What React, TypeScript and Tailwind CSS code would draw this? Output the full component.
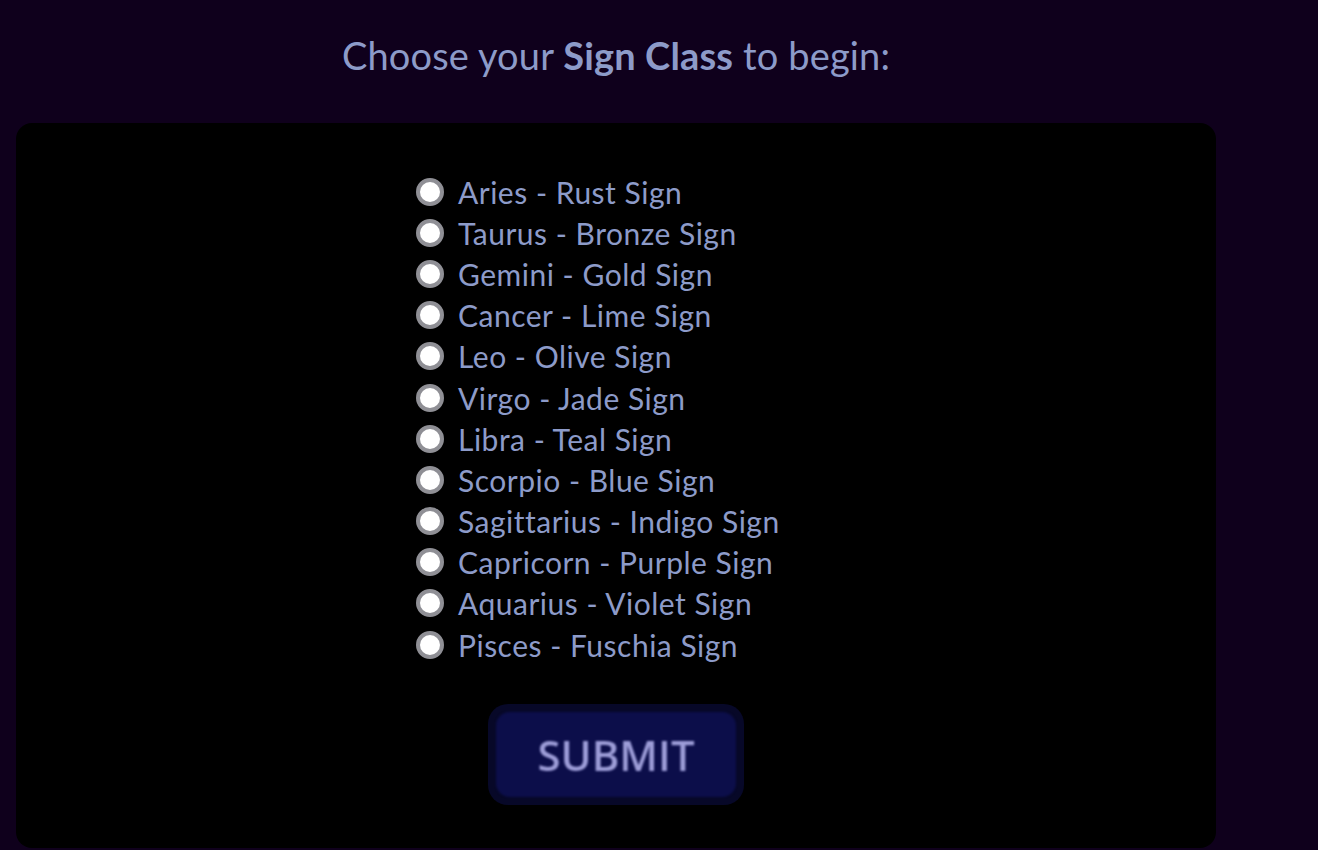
import React from "react";

const signs = [
  "Aries - Rust Sign",
  "Taurus - Bronze Sign",
  "Gemini - Gold Sign",
  "Cancer - Lime Sign",
  "Leo - Olive Sign",
  "Virgo - Jade Sign",
  "Libra - Teal Sign",
  "Scorpio - Blue Sign",
  "Sagittarius - Indigo Sign",
  "Capricorn - Purple Sign",
  "Aquarius - Violet Sign",
  "Pisces - Fuschia Sign",
];

export default function App() {
  return (
    <div
      className="min-h-screen w-full bg-[#0f001c] text-[#8d9bc9]"
      style={{ fontFamily: "Lato, 'Noto Sans', sans-serif" }}
    >
      <div className="ml-4 w-[1200px] flex flex-col items-center">
        <h1 className="pt-[34px] h-[123px] text-[38px] leading-[42px] font-normal tracking-[0.15px]">
          Choose your <span className="font-bold">Sign Class</span> to begin:
        </h1>
        <div className="w-[1200px] bg-black rounded-[16px] flex flex-col items-center pt-[48px] pb-[43px]">
          <div className="w-[400px] flex flex-col">
            {signs.map((s) => (
              <label key={s} className="h-[41.2px] flex items-center cursor-pointer">
                <span className="w-[28px] h-[28px] rounded-full border-[4px] border-[#8f8f95] bg-white shrink-0" />
                <span className="ml-[14px] text-[30px] leading-none tracking-[0.5px]">{s}</span>
              </label>
            ))}
          </div>
          <div className="mt-[39px] rounded-[20px] bg-[#070828] p-[8px]">
            <button
              className="w-[240px] h-[85px] rounded-[14px] bg-[#0c0e4a] text-[#9d9dd8] text-[42px] font-semibold flex items-center justify-center"
              style={{ fontFamily: "'Open Sans', sans-serif", filter: "blur(0.8px)" }}
            >
              SUBMIT
            </button>
          </div>
        </div>
      </div>
    </div>
  );
}
